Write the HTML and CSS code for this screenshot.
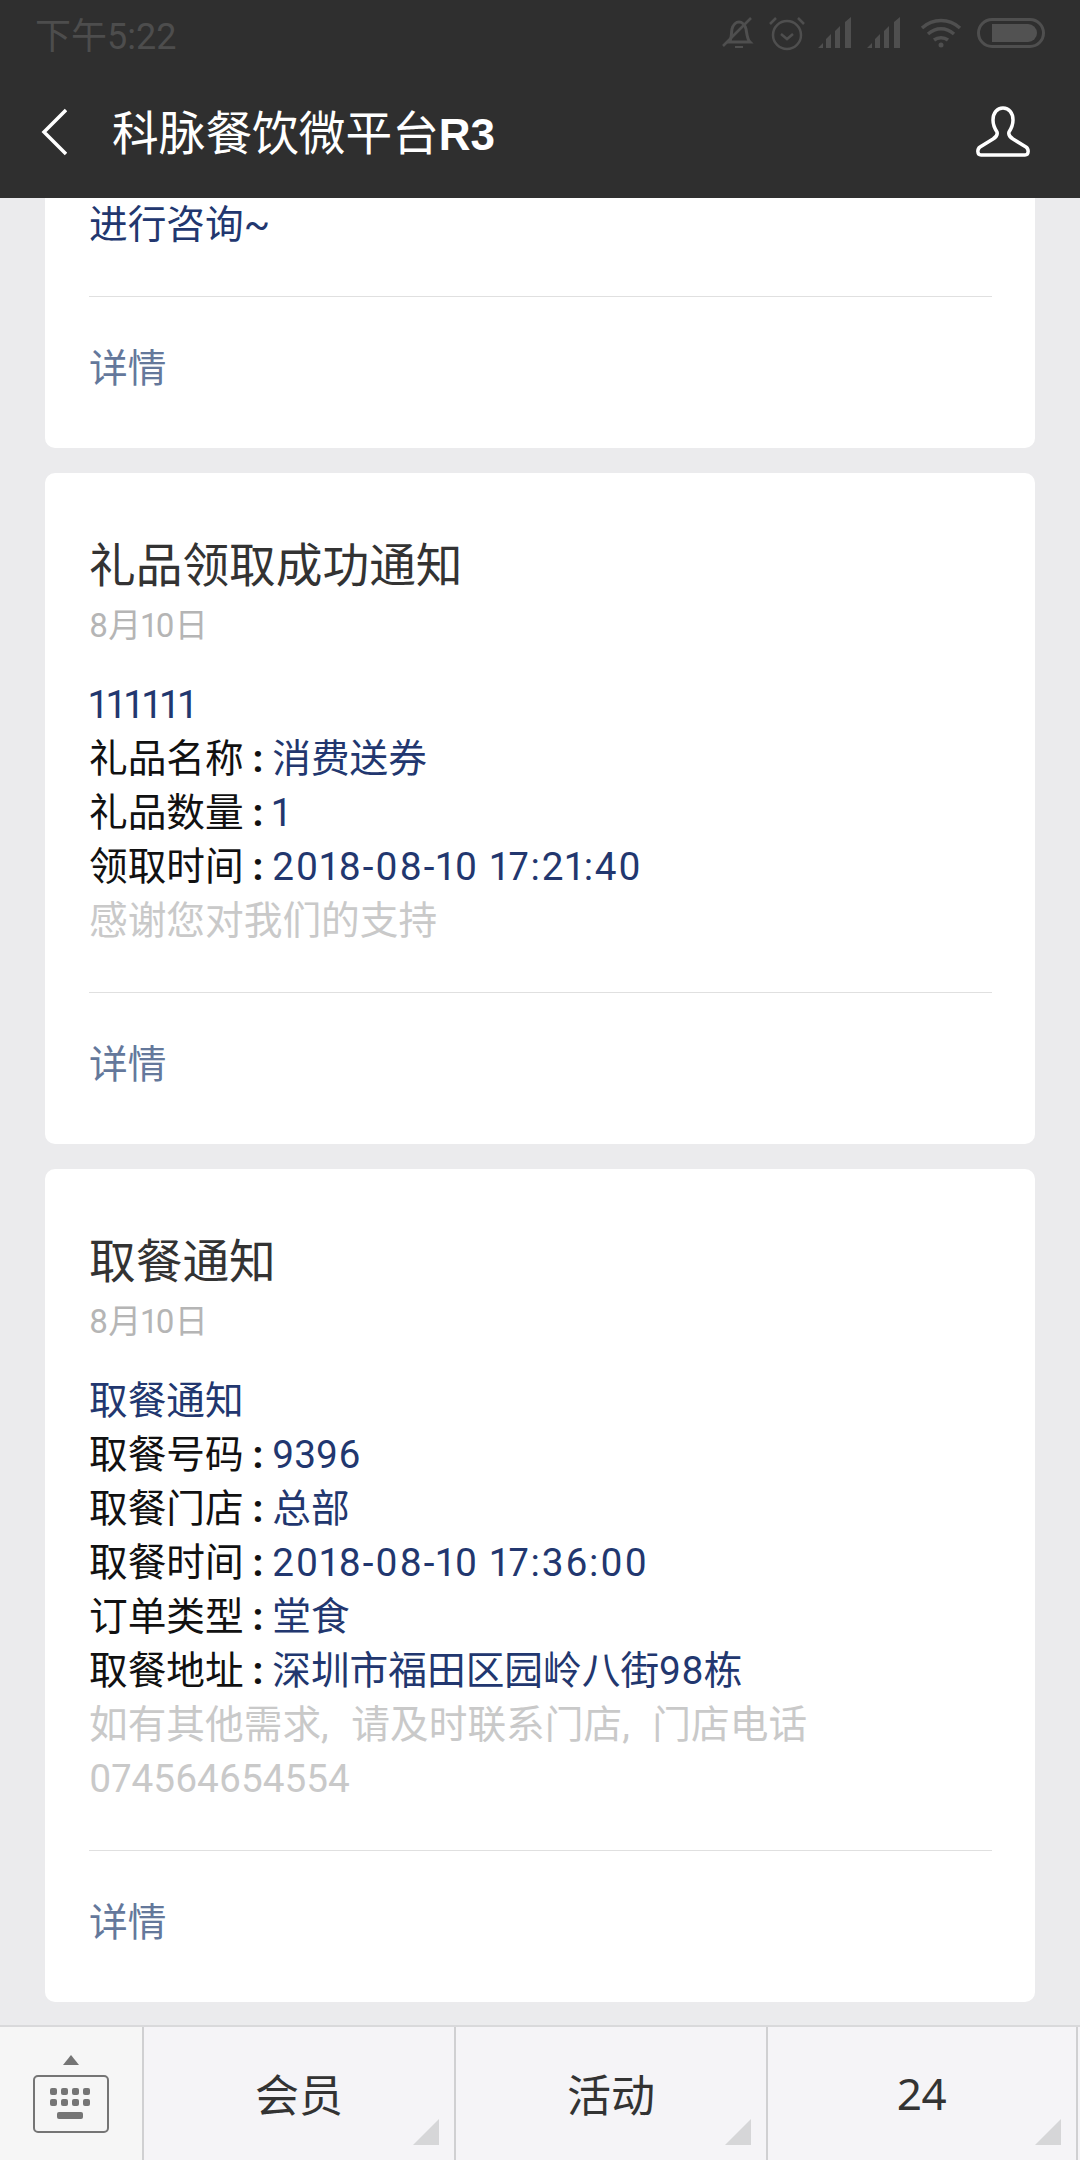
FILE: index.html
```html
<!DOCTYPE html>
<html lang="zh-CN">
<head>
    <meta charset="UTF-8">
    <meta name="viewport" content="width=device-width, initial-scale=1.0">
    <title>科脉餐饮微平台R3</title>
    <link rel="stylesheet" href="styles.css">
</head>
<body>
    <header class="top">
        <div class="status">
            <span class="clock">下午5:22</span>
            <div class="status-icons">
                <svg width="34" height="34" viewBox="0 0 34 34" fill="none" stroke="#4f4f4f" stroke-width="3">
                    <path d="M7 26c3-3 2-8 3-13 1-4 4-7 7-7s6 3 7 7c1 5 1 10 4 13z"/>
                    <path d="M13 31h8" stroke-width="2"/>
                    <path d="M1 30L29 2" stroke-width="2.5"/>
                </svg>
                <svg width="36" height="36" viewBox="0 0 36 36" fill="none" stroke="#4f4f4f" stroke-width="2.5">
                    <circle cx="18" cy="20" r="14"/>
                    <path d="M12 19l6 5 6-5"/>
                    <path d="M1 9l6-6M35 9l-6-6"/>
                </svg>
                <svg class="signal" width="36" height="32" viewBox="0 0 36 32" fill="#4f4f4f">
                    <path d="M0 31l5-5v5zM8 31V22l5-5v14zM17 31V14l5-5v22zM27 31V5l6-5v31z"/>
                </svg>
                <svg class="signal" width="36" height="32" viewBox="0 0 36 32" fill="#4f4f4f">
                    <path d="M0 31l5-5v5zM8 31V22l5-5v14zM17 31V14l5-5v22zM27 31V5l6-5v31z"/>
                </svg>
                <svg class="wifi" width="42" height="32" viewBox="0 0 42 32" fill="none" stroke="#4f4f4f" stroke-width="3.5">
                    <path d="M2 11c11-10 27-10 38 0"/>
                    <path d="M8 17c8-7 18-7 26 0"/>
                    <path d="M14 23c4-3 10-3 14 0"/>
                    <circle cx="21" cy="28" r="2.5" fill="#4f4f4f" stroke="none"/>
                </svg>
                <div class="battery"><div class="battery-level"></div></div>
            </div>
        </div>
        <div class="nav">
            <svg class="back" width="26" height="48" viewBox="0 0 26 48" fill="none" stroke="#fff" stroke-width="3.5">
                <path d="M25 2L3 24l22 22"/>
            </svg>
            <h1>科脉餐饮微平台<b>R3</b></h1>
            <svg class="user" width="54" height="52" viewBox="0 0 54 52" fill="none" stroke="#fff" stroke-width="3.5" stroke-linejoin="round">
                <path d="M27 2c-6 0-10 5-10 12 0 5 2 9 4 12 1 3-1 5-4 7L4 41c-3 2-3 8 1 8h44c4 0 4-6 1-8l-13-8c-3-2-5-4-4-7 2-3 4-7 4-12 0-7-4-12-10-12z"/>
            </svg>
        </div>
    </header>

    <main class="feed">
        <section class="card card-cut">
            <p class="line"><span class="val">进行咨询~</span></p>
            <div class="more">详情</div>
        </section>

        <section class="card">
            <h2>礼品领取成功通知</h2>
            <div class="date">8月10日</div>
            <div class="body">
                <p class="line"><span class="val ones">111111</span></p>
                <p class="line"><span class="key">礼品名称<i>:</i></span><span class="val">消费送券</span></p>
                <p class="line"><span class="key">礼品数量<i>:</i></span><span class="val">1</span></p>
                <p class="line"><span class="key">领取时间<i>:</i></span><span class="val time">2018-08-10 17:21:40</span></p>
                <p class="line note">感谢您对我们的支持</p>
            </div>
            <div class="more">详情</div>
        </section>

        <section class="card">
            <h2>取餐通知</h2>
            <div class="date">8月10日</div>
            <div class="body">
                <p class="line"><span class="val">取餐通知</span></p>
                <p class="line"><span class="key">取餐号码<i>:</i></span><span class="val">9396</span></p>
                <p class="line"><span class="key">取餐门店<i>:</i></span><span class="val">总部</span></p>
                <p class="line"><span class="key">取餐时间<i>:</i></span><span class="val time">2018-08-10 17:36:00</span></p>
                <p class="line"><span class="key">订单类型<i>:</i></span><span class="val">堂食</span></p>
                <p class="line"><span class="key">取餐地址<i>:</i></span><span class="val">深圳市福田区园岭八街98栋</span></p>
                <p class="line note">如有其他需求, 请及时联系门店, 门店电话<br>074564654554</p>
            </div>
            <div class="more">详情</div>
        </section>
    </main>

    <footer class="menu">
        <div class="menu-kbd">
            <div class="kbd-arrow"></div>
            <svg width="76" height="58" viewBox="0 0 76 58" fill="#757575">
                <rect x="1" y="1" width="74" height="56" rx="4" fill="none" stroke="#757575" stroke-width="2"/>
                <rect x="17" y="13" width="7" height="7" rx="2"/>
                <rect x="28" y="13" width="7" height="7" rx="2"/>
                <rect x="39" y="13" width="7" height="7" rx="2"/>
                <rect x="50" y="13" width="7" height="7" rx="2"/>
                <rect x="17" y="24" width="7" height="7" rx="2"/>
                <rect x="28" y="24" width="7" height="7" rx="2"/>
                <rect x="39" y="24" width="7" height="7" rx="2"/>
                <rect x="50" y="24" width="7" height="7" rx="2"/>
                <rect x="24" y="37" width="26" height="7" rx="2"/>
            </svg>
        </div>
        <div class="menu-item">会员</div>
        <div class="menu-item">活动</div>
        <div class="menu-item">24</div>
    </footer>
</body>
</html>
```

FILE: styles.css
```css
* {
    box-sizing: border-box;
}

body {
    margin: 0;
    width: 1080px;
    height: 2160px;
    overflow: hidden;
    display: flex;
    flex-direction: column;
    background-color: #ebebed;
    font-family: Roboto, "Noto Sans CJK SC", sans-serif;
    font-variant-numeric: proportional-nums;
}

p, h1, h2 {
    margin: 0;
    font-weight: normal;
}

.top {
    height: 198px;
    background-color: #2f2f2f;
    flex-shrink: 0;
}

.status {
    height: 66px;
    padding: 0 35px;
    display: flex;
    align-items: center;
    justify-content: space-between;
}

.clock {
    font-size: 36px;
    color: #4d4d4d;
}

.status-icons {
    display: flex;
    align-items: center;
    gap: 13px;
}

.wifi {
    margin-left: 4px;
}

.battery {
    width: 68px;
    height: 30px;
    margin-left: 2px;
    padding: 3px 5px 3px 12px;
    border: 3px solid #4f4f4f;
    border-radius: 15px;
}

.battery-level {
    height: 100%;
    background-color: #525252;
    border-radius: 0 9px 9px 0;
}

.nav {
    height: 132px;
    padding: 0 50px 0 41px;
    display: flex;
    align-items: center;
}

.nav h1 {
    flex: 1;
    margin: 0 0 6px 45px;
    font-size: 46.7px;
    color: #fff;
}

.nav b {
    font-family: "Liberation Sans", sans-serif;
    font-size: 44px;
    font-weight: bold;
}

.feed {
    flex: 1;
    padding: 0 45px;
    display: flex;
    flex-direction: column;
    gap: 25px;
}

.card {
    background-color: #fff;
    border-radius: 10px;
    padding: 63px 43px 0 44px;
}

.card-cut {
    padding-top: 0;
    border-radius: 0 0 10px 10px;
}

.card h2 {
    font-size: 46.7px;
    line-height: 60px;
    color: #333;
}

.date {
    margin-top: 8px;
    font-size: 33px;
    line-height: 44px;
    color: #b5b5b5;
}

.body {
    margin-top: 30px;
}

.line {
    font-size: 38.7px;
    line-height: 54px;
    color: #111;
}

.key i {
    display: inline-block;
    width: 28.5px;
    text-align: center;
    font-style: normal;
    font-weight: bold;
}

.val {
    color: #22376f;
}

/* phone font sets these wider than Roboto */
.time {
    letter-spacing: 1.75px;
}

.ones {
    letter-spacing: 1.1px;
}

.note {
    color: #c9c9c9;
    word-spacing: 13px;
}

.more {
    margin-top: 44px;
    padding: 45px 0 52px;
    border-top: 1px solid #e0e0e0;
    font-size: 38.7px;
    line-height: 54px;
    color: #64789b;
}

.menu {
    height: 135px;
    flex-shrink: 0;
    display: flex;
    background-color: #f5f4f7;
    border-top: 2px solid #d9d9db;
}

.menu-kbd {
    width: 142px;
    display: flex;
    flex-direction: column;
    align-items: center;
    padding-top: 28px;
    gap: 10px;
    background-color: #f6f6f6;
}

.kbd-arrow {
    width: 0;
    height: 0;
    border-left: 8px solid transparent;
    border-right: 8px solid transparent;
    border-bottom: 10px solid #757575;
}

.menu-item {
    position: relative;
    width: 312px;
    border-left: 2px solid #d0d0d2;
    display: flex;
    align-items: center;
    justify-content: center;
    font-family: "Noto Sans", "Noto Sans CJK SC", sans-serif;
    font-size: 44px;
    color: #333;
    padding-bottom: 2px;
}

.menu-item:last-child {
    border-right: 2px solid #d0d0d2;
}

/* little corner marker on each menu button */
.menu-item::after {
    content: "";
    position: absolute;
    right: 15px;
    bottom: 15px;
    width: 0;
    height: 0;
    border-left: 26px solid transparent;
    border-bottom: 26px solid #d6d6d8;
}
```
